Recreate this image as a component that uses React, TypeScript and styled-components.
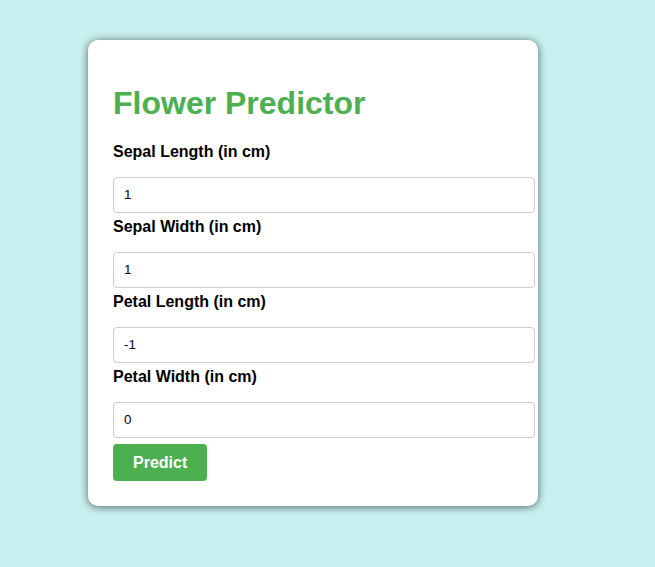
import React from "react";
import styled, { createGlobalStyle } from "styled-components";

const Global = createGlobalStyle`
  html, body { margin: 0; padding: 0; background: #c9f0f0; }
  body { font-family: "Liberation Sans", Arial, sans-serif; }
  * { box-sizing: content-box; }
`;

const Page = styled.div`
  min-height: 567px;
  padding: 40px 0 0 88px;
  box-sizing: border-box;
`;

const Card = styled.div`
  width: 400px;
  padding: 24px 25px 25px 25px;
  background: #ffffff;
  border-radius: 10px;
  box-shadow: 0 1px 8px rgba(0, 0, 0, 0.6);
`;

const Title = styled.h1`
  color: #4caf50;
  font-size: 32px;
  font-weight: bold;
  margin: 21px 0 21px 0;
`;

const Label = styled.label`
  display: block;
  font-size: 16px;
  font-weight: bold;
  color: #000;
  margin-bottom: 16px;
`;

const Input = styled.input`
  display: block;
  width: 100%;
  padding: 10px;
  margin: 0 0 5px 0;
  border: 1px solid #cccccc;
  border-radius: 4px;
  font-family: "Liberation Sans", Arial, sans-serif;
  font-size: 13.33px;
  line-height: 14px;
  color: #000;
  outline: none;
`;

const Button = styled.button`
  display: block;
  margin-top: 6px;
  padding: 10px 20px;
  line-height: 17px;
  background: #4caf50;
  color: #ffffff;
  border: none;
  border-radius: 4px;
  font-family: "Liberation Sans", Arial, sans-serif;
  font-size: 16px;
  font-weight: bold;
  cursor: pointer;
`;

const fields = [
  { label: "Sepal Length (in cm)", value: "1" },
  { label: "Sepal Width (in cm)", value: "1" },
  { label: "Petal Length (in cm)", value: "-1" },
  { label: "Petal Width (in cm)", value: "0" },
];

export default function App() {
  return (
    <>
      <Global />
      <Page>
        <Card>
          <Title>Flower Predictor</Title>
          {fields.map((f) => (
            <React.Fragment key={f.label}>
              <Label>{f.label}</Label>
              <Input type="text" defaultValue={f.value} />
            </React.Fragment>
          ))}
          <Button>Predict</Button>
        </Card>
      </Page>
    </>
  );
}
